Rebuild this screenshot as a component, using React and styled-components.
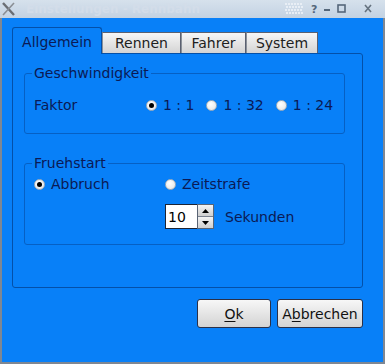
import React from "react";
import styled, { createGlobalStyle } from "styled-components";

const Global = createGlobalStyle`
  html, body { margin: 0; padding: 0; background: #0880f8; }
  body { font-family: "DejaVu Sans", "Liberation Sans", sans-serif; }
  * { box-sizing: border-box; }
`;

const Window = styled.div`
  width: 385px;
  height: 364px;
  display: flex;
  flex-direction: column;
  background: #0880f8;
  font-family: "DejaVu Sans", sans-serif;
  font-size: 14px;
  line-height: 16px;
  color: #0b1a55;
`;

const TitleBar = styled.div`
  height: 18px;
  flex: none;
  display: flex;
  align-items: center;
  background: linear-gradient(#d6e1ec, #c3d2e2);
  padding: 0 4px 0 2px;
`;

const TitleText = styled.span`
  margin-left: 11px;
  font-size: 12px;
  font-weight: bold;
  color: #d3dde9;
  flex: 1;
  white-space: nowrap;
`;

const TitleButtons = styled.div`
  display: flex;
  align-items: center;
`;

const Body = styled.div`
  flex: 1;
  display: flex;
  flex-direction: column;
  border-left: 2px solid #7f8792;
  border-right: 2px solid #7f8792;
  border-bottom: 2px solid #7f8792;
  padding: 9px 0 0 10px;
`;

const TabWidget = styled.div`
  width: 351px;
  display: flex;
  flex-direction: column;
`;

const TabBar = styled.div`
  display: flex;
  align-items: flex-end;
  height: 27px;
  position: relative;
  z-index: 1;
  margin-bottom: -1px;
`;

const Tab = styled.div`
  width: ${(p) => p.$w}px;
  display: flex;
  align-items: center;
  justify-content: center;
  white-space: nowrap;
  ${(p) =>
    p.$active
      ? `
    height: 27px;
    background: #0880f8;
    border: 1px solid #0450a8;
    border-bottom: none;
    border-radius: 3px 3px 0 0;
    color: #0b1a55;
    padding-top: 1px;
  `
      : `
    height: 21px;
    margin-bottom: 1px;
    background: linear-gradient(#f6f6f6, #d4d4d4);
    border: 1px solid #5a6070;
    border-left: 1px solid #8a9098;
    border-bottom: none;
    color: #202020;
  `}
`;

const Pane = styled.div`
  height: 235px;
  border: 1px solid #0450a8;
  border-radius: 0 3px 3px 3px;
  padding: 19px 0 0 11px;
  display: flex;
  flex-direction: column;
  gap: 29px;
`;

const Frame = styled.div`
  position: relative;
  width: 321px;
  height: ${(p) => p.$h}px;
  border: 1px solid #0660c4;
  border-radius: 3px;
  padding: ${(p) => p.$pt}px 9px 0 9px;
`;

const FrameTitle = styled.span`
  position: absolute;
  top: -9px;
  left: 7px;
  padding: 0 2px;
  background: #0880f8;
  color: #0b1a55;
  white-space: nowrap;
`;

const Row = styled.div`
  display: flex;
  align-items: center;
  height: 16px;
`;

const Label = styled.span`
  width: 112px;
  flex: none;
`;

const Options = styled.div`
  display: flex;
  align-items: center;
  gap: 12px;
`;

const Option = styled.label`
  display: flex;
  align-items: center;
  gap: 6px;
  white-space: nowrap;
`;

const RadioCircle = styled.span`
  width: 11px;
  height: 11px;
  border-radius: 50%;
  background: radial-gradient(circle at 40% 35%, #ffffff, #e2e2e2);
  border: 1px solid #a8b0b8;
  display: flex;
  align-items: center;
  justify-content: center;
  flex: none;
  &::after {
    content: "";
    width: 5px;
    height: 5px;
    border-radius: 50%;
    background: #000;
    display: ${(p) => (p.$on ? "block" : "none")};
  }
`;

const Grid = styled.div`
  display: grid;
  grid-template-columns: 131px auto;
  row-gap: 12px;
  align-items: center;
`;

const SpinRow = styled.div`
  display: flex;
  align-items: center;
  gap: 11px;
`;

const SpinBox = styled.div`
  display: flex;
  height: 25px;
`;

const SpinText = styled.div`
  width: 32px;
  height: 25px;
  background: #fff;
  border: 1px solid #1c2434;
  border-right: none;
  color: #000;
  padding: 4px 0 0 2px;
`;

const SpinButtons = styled.div`
  width: 17px;
  display: flex;
  flex-direction: column;
  border: 1px solid #5a6474;
`;

const SpinBtn = styled.div`
  flex: 1;
  display: flex;
  align-items: center;
  justify-content: center;
  background: linear-gradient(#f4f4f4, #cfcfcf);
  & + & {
    border-top: 1px solid #7a8290;
  }
`;

const ButtonRow = styled.div`
  width: 351px;
  display: flex;
  justify-content: flex-end;
  gap: 6px;
  margin-top: 11px;
`;

const PushButton = styled.div`
  width: ${(p) => p.$w}px;
  height: 29px;
  border: 1px solid #2a3048;
  border-radius: 3px;
  background: linear-gradient(#f7f7f7, #d3d3d3);
  color: #111;
  display: flex;
  align-items: center;
  justify-content: center;
  white-space: nowrap;
  u { text-decoration-thickness: 1px; text-underline-offset: 2px; }
`;

const Radio = ({ on, children }) => (
  <Option>
    <RadioCircle $on={on} />
    <span>{children}</span>
  </Option>
);

const XLogo = () => (
  <svg width="13" height="14" viewBox="0 0 13 14">
    <path d="M1 1 L12 13" stroke="#6a6e74" strokeWidth="2.4" />
    <path d="M12 1 L1 13" stroke="#8a8e94" strokeWidth="1.6" />
  </svg>
);

const Dots = () => (
  <svg width="18" height="12" viewBox="0 0 18 12">
    {Array.from({ length: 24 }).map((_, i) => {
      const x = (i % 6) * 3;
      const y = Math.floor(i / 6) * 3;
      return <rect key={i} x={x + ((y / 3) % 2)} y={y} width="2" height="2" fill="#e8eef5" />;
    })}
  </svg>
);

const TitleIcons = () => (
  <TitleButtons>
    <Dots />
    <svg width="72" height="14" viewBox="0 0 72 14" style={{ marginLeft: 6 }}>
      <text x="2" y="11" fontFamily="DejaVu Sans" fontSize="11" fontWeight="bold" fill="#55677a">?</text>
      <rect x="15" y="7" width="6" height="2" fill="#55677a" />
      <rect x="29" y="3" width="7" height="7" fill="none" stroke="#55677a" strokeWidth="1.6" />
      <path d="M56 3 L62 10 M62 3 L56 10" stroke="#66737f" strokeWidth="1.6" />
    </svg>
  </TitleButtons>
);

const Triangle = ({ up }) => (
  <svg width="7" height="4" viewBox="0 0 7 4">
    <path d={up ? "M0 4 L3.5 0 L7 4 Z" : "M0 0 L7 0 L3.5 4 Z"} fill="#000" />
  </svg>
);

export default function App() {
  return (
    <>
      <Global />
      <Window>
        <TitleBar>
          <XLogo />
          <TitleText>Einstellungen - Rennbahn</TitleText>
          <TitleIcons />
        </TitleBar>
        <Body>
          <TabWidget>
            <TabBar>
              <Tab $active $w={90}>Allgemein</Tab>
              <Tab $w={79}>Rennen</Tab>
              <Tab $w={65}>Fahrer</Tab>
              <Tab $w={72}>System</Tab>
            </TabBar>
            <Pane>
              <Frame $h={61} $pt={23}>
                <FrameTitle>Geschwindigkeit</FrameTitle>
                <Row>
                  <Label>Faktor</Label>
                  <Options>
                    <Radio on>1 : 1</Radio>
                    <Radio>1 : 32</Radio>
                    <Radio>1 : 24</Radio>
                  </Options>
                </Row>
              </Frame>
              <Frame $h={82} $pt={12}>
                <FrameTitle>Fruehstart</FrameTitle>
                <Grid>
                  <Radio on>Abbruch</Radio>
                  <Radio>Zeitstrafe</Radio>
                  <span />
                  <SpinRow>
                    <SpinBox>
                      <SpinText>10</SpinText>
                      <SpinButtons>
                        <SpinBtn><Triangle up /></SpinBtn>
                        <SpinBtn><Triangle /></SpinBtn>
                      </SpinButtons>
                    </SpinBox>
                    <span>Sekunden</span>
                  </SpinRow>
                </Grid>
              </Frame>
            </Pane>
          </TabWidget>
          <ButtonRow>
            <PushButton $w={74}><span><u>O</u>k</span></PushButton>
            <PushButton $w={86}><span>A<u>b</u>brechen</span></PushButton>
          </ButtonRow>
        </Body>
      </Window>
    </>
  );
}
